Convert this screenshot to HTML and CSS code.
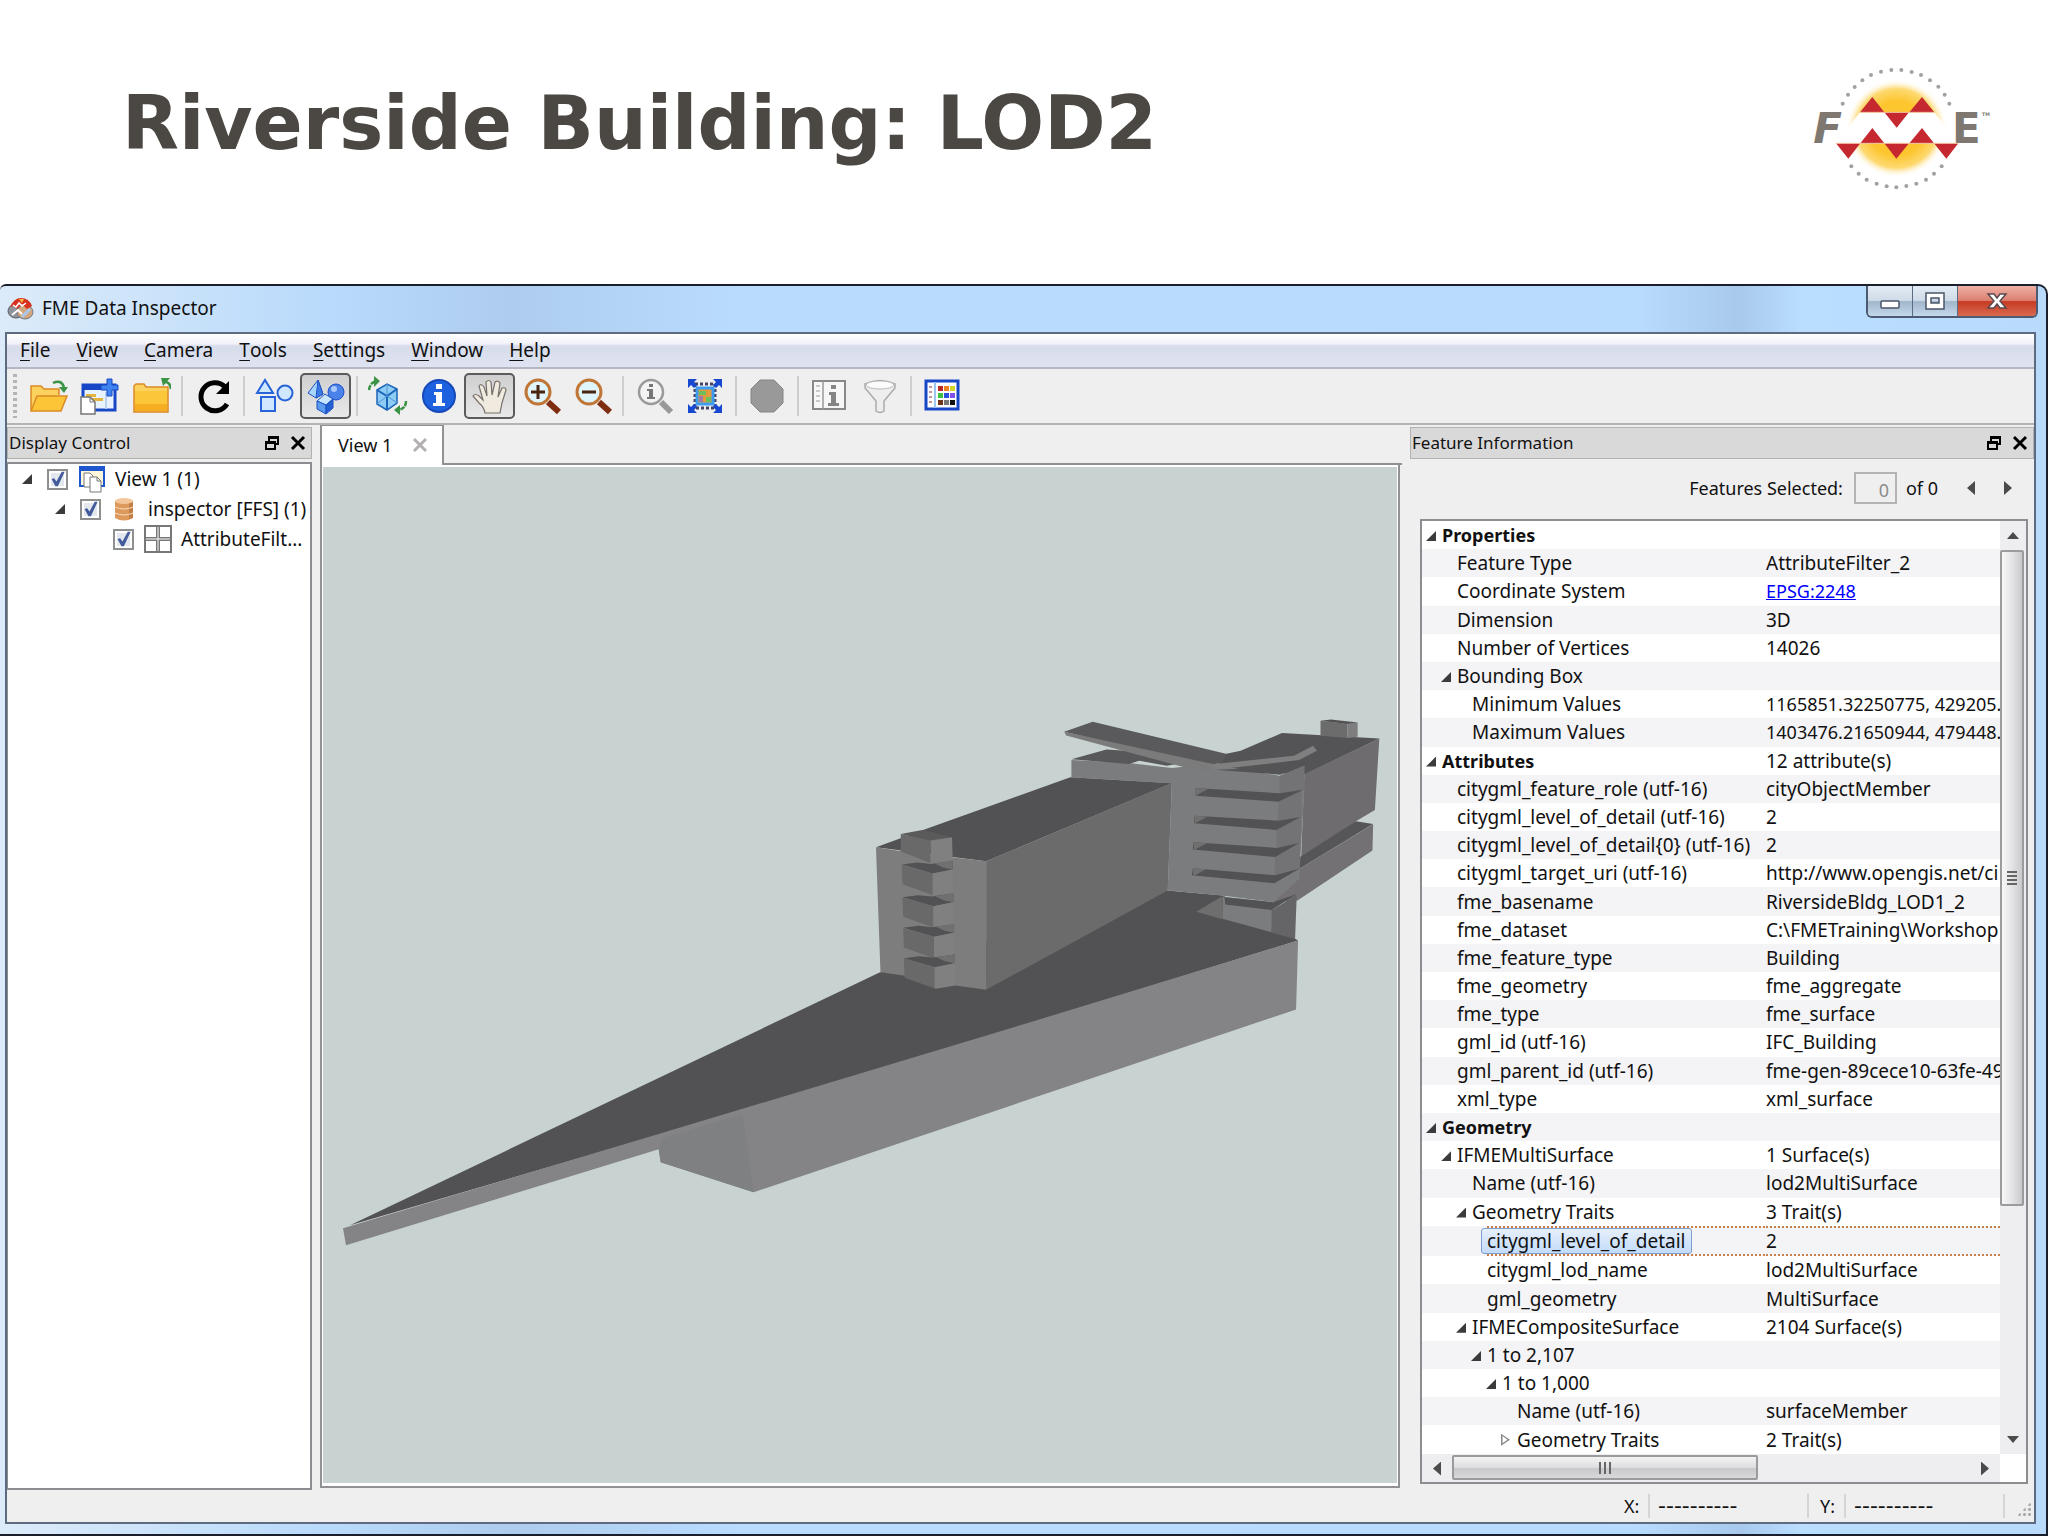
FILE: index.html
```html
<!DOCTYPE html>
<html lang="en">
<head>
    <meta charset="UTF-8">
    <meta name="viewport" content="width=device-width, initial-scale=1.0">
    <title>Riverside Building: LOD2</title>
    <link rel="stylesheet" href="styles.css">
</head>
<body>
    <header class="slide-header">
        <h1>Riverside Building: LOD2</h1>
        <svg class="logo" viewBox="0 0 720 480" role="img" aria-label="FME">
            <defs>
                <radialGradient id="sun">
                    <stop offset="0.55" stop-color="#fdc62f"/>
                    <stop offset="0.8" stop-color="#fdd970"/>
                    <stop offset="1" stop-color="#fff" stop-opacity="0"/>
                </radialGradient>
            </defs>
            <ellipse cx="350" cy="235" rx="152" ry="148" fill="url(#sun)"/>
            <g fill="#a3a0a3">
                <circle cx="188" cy="161" r="6"/><circle cx="204" cy="134" r="6"/><circle cx="224" cy="111" r="6"/>
                <circle cx="247" cy="91" r="6"/><circle cx="273" cy="75" r="6"/><circle cx="303" cy="65" r="6"/>
                <circle cx="334" cy="60" r="6"/><circle cx="364" cy="60" r="6"/><circle cx="395" cy="66" r="6"/>
                <circle cx="423" cy="75" r="6"/><circle cx="450" cy="91" r="6"/><circle cx="475" cy="110" r="6"/>
                <circle cx="494" cy="134" r="6"/><circle cx="508" cy="161" r="6"/><circle cx="214" cy="349" r="6"/>
                <circle cx="236" cy="371" r="6"/><circle cx="260" cy="389" r="6"/><circle cx="290" cy="401" r="6"/>
                <circle cx="320" cy="409" r="6"/><circle cx="349" cy="412" r="6"/><circle cx="379" cy="408" r="6"/>
                <circle cx="409" cy="401" r="6"/><circle cx="438" cy="389" r="6"/><circle cx="462" cy="371" r="6"/>
                <circle cx="485" cy="349" r="6"/>
            </g>
            <path d="M240 187H463L535 280H168Z" fill="#fff"/>
            <text class="logo-f" x="100" y="279">F</text>
            <text class="logo-e" x="516" y="279">E</text>
            <text class="logo-tm" x="606" y="197">TM</text>
            <path d="M240 187l37-46 36 46zM388 187l38-46 37 46zM313 187h74l-37 46zM241 280l36-46 36 46zM388 280l38-46 36 46zM168 280h73l-36 46zM313 280h74l-38 46zM462 280h73l-36 46z" fill="#c5282f"/>
            <path d="M240 187H463M168 280H535" stroke="#f2c3a0" stroke-width="3"/>
        </svg>
    </header>

    <div class="window">
        <div class="titlebar">
            <svg class="app-icon" viewBox="0 0 27 24">
                <ellipse cx="9" cy="14" rx="8" ry="7" fill="#8f9399" stroke="#59606b"/>
                <ellipse cx="18" cy="15" rx="8" ry="7" fill="#d3a77c" stroke="#6f7787"/>
                <path d="M3 10q4-9 11-9 8 0 11 8l-5 3-5-5-5 5-3-3z" fill="#d8301f"/>
                <path d="M12 2h5l-2 4z" fill="#f4b942"/>
                <path d="M6 8l3 2 3-4 3 3 4-3" stroke="#fff" stroke-width="1.500" fill="none"/>
                <path d="M5 18l6-5 4 4" stroke="#fff" stroke-width="2" fill="none"/>
                <path d="M15 20l8-8" stroke="#a9c7ef" stroke-width="3"/>
            </svg>
            <span class="window-title">FME Data Inspector</span>
            <div class="window-buttons">
                <button class="win-btn" aria-label="Minimize"><svg width="22" height="20" viewBox="0 0 22 20"><rect x="2" y="10" width="18" height="7" rx="1" fill="#fff" stroke="#4a5568" stroke-width="1.500"/></svg></button>
                <button class="win-btn" aria-label="Maximize"><svg width="22" height="20" viewBox="0 0 22 20"><path d="M2 2h18v16H2zM7 7v5h8V7z" fill="#fff" fill-rule="evenodd" stroke="#4a5568" stroke-width="1.500"/></svg></button>
                <button class="win-btn win-close" aria-label="Close"><svg width="22" height="20" viewBox="0 0 22 20"><path d="M2 3h6l3 4 3-4h6l-6 7 6 7h-6l-3-4-3 4H2l6-7z" fill="#fff" stroke="#5a4a50" stroke-width="1.500"/></svg></button>
            </div>
        </div>

        <div class="client">
            <nav class="menubar">
                <button><u>F</u>ile</button>
                <button><u>V</u>iew</button>
                <button><u>C</u>amera</button>
                <button><u>T</u>ools</button>
                <button><u>S</u>ettings</button>
                <button><u>W</u>indow</button>
                <button><u>H</u>elp</button>
            </nav>

            <div class="toolbar">
                <span class="grip"></span>
                <button aria-label="Open dataset"><svg viewBox="0 0 40 40">
                    <path d="M2 34V10h10l3 3h15v6" fill="#fbd25d" stroke="#dc8a24" stroke-width="1.500"/>
                    <path d="M2 35L8 20h30l-6 15z" fill="#fcc437" stroke="#dc8a24" stroke-width="1.500"/>
                    <path d="M24 7q8-4 11 4" fill="none" stroke="#3b9346" stroke-width="2.500"/><path d="M30 11h9l-4 6z" fill="#3b9346"/>
                </svg></button>
                <button aria-label="New view"><svg viewBox="0 0 40 40">
                    <rect x="3" y="9" width="32" height="25" fill="#e9f3ff" stroke="#1747c6" stroke-width="3"/>
                    <path d="M2 9h30v5H2z" fill="#1747c6"/><path d="M6 18h10v3H6zM9 22h14v3H9z" fill="#e3b53c"/><path d="M26 16v17" stroke="#b9d3ee" stroke-width="2"/>
                    <path d="M27 3h5v6h6v5h-6v6h-5v-6h-6V9h6z" fill="#3f83ee" stroke="#1747c6"/>
                    <path d="M1 21h9l5 5v12H1z" fill="#fff" stroke="#777" stroke-width="1.500"/><path d="M10 21v5h5" fill="none" stroke="#777"/>
                </svg></button>
                <button aria-label="Close dataset"><svg viewBox="0 0 40 40">
                    <path d="M3 36V10l2-2h8l2 3h22v25z" fill="#fbd25d" stroke="#dc8a24" stroke-width="1.500"/>
                    <path d="M4 15h32v20H4z" fill="#fcc63a"/><path d="M4 28h32v7H4z" fill="#f5ad22"/>
                    <path d="M40 13q-1-7-6-7" fill="none" stroke="#3b9346" stroke-width="2.500"/><path d="M30 2h9l-7 8z" fill="#3b9346"/>
                </svg></button>
                <span class="sep"></span>
                <button aria-label="Refresh"><svg viewBox="0 0 40 40">
                    <path d="M34 28a14 14 0 1 1-2-17" fill="none" stroke="#000" stroke-width="5"/><path d="M36 5v13H23z"/>
                </svg></button>
                <span class="sep"></span>
                <button aria-label="2D"><svg viewBox="0 0 40 40" fill="#cfe8ff" stroke="#2864d8" stroke-width="2">
                    <path d="M2 17L10 4l8 13z"/><circle cx="30" cy="17" r="7.500"/><rect x="6" y="21" width="14" height="14"/>
                </svg></button>
                <button class="pressed" aria-label="3D"><svg viewBox="0 0 40 40" stroke="#1d52c4">
                    <path d="M2 17L12 4l5 14-7 4z" fill="#a9d4ff"/><path d="M12 4l-2 18 7-4z" fill="#3d7ce4"/>
                    <circle cx="30" cy="16" r="8" fill="#4a82ea"/><circle cx="28" cy="13" r="3" fill="#a9c9ff" stroke="none"/>
                    <path d="M11 25l8-7 8 5-7 6z" fill="#c8e5ff"/><path d="M11 25l9 4v9l-9-5z" fill="#5c9bf0"/><path d="M20 29l7-6v9l-7 6z" fill="#235ed2"/>
                </svg></button>
                <span class="sep"></span>
                <button aria-label="Orbit"><svg viewBox="0 0 40 40">
                    <path d="M9 14l10-6 10 5v14l-10 7-10-6z" fill="#8ecbf5" stroke="#1c66b8" stroke-width="1.500"/>
                    <path d="M9 14l10 6 10-7M19 20v14" fill="none" stroke="#1c66b8" stroke-width="2"/><path d="M19 8v12M9 28l10-8 10 7" fill="none" stroke="#4d97d8"/>
                    <path d="M1 14q1-8 8-9M38 25q0 8-8 9" fill="none" stroke="#3b9346" stroke-width="2.500" stroke-dasharray="5 1"/><path d="M6 0l6 5-6 6zM32 29l-6 5 6 5z" fill="#3b9346"/>
                </svg></button>
                <button aria-label="Information"><svg viewBox="0 0 40 40">
                    <circle cx="20" cy="20" r="16" fill="#1f62e0" stroke="#1649ba" stroke-width="2"/>
                    <path d="M17 8h6v5h-6zM15 16h8v11h3v3H14v-3h3v-8h-2z" fill="#fff"/>
                </svg></button>
                <button class="pressed" aria-label="Pan"><svg viewBox="0 0 40 40">
                    <path d="M15 37q-1-6-6-10l-6-7q2-3 6 0l4 4-4-14q2-3 5 1l3 9-1-14q3-3 5 0l1 13 3-13q3-2 5 1l-2 14 4-9q4-1 4 2l-4 13-2 10z" fill="#f1eadf" stroke="#75706b" stroke-width="1.200"/>
                </svg></button>
                <button aria-label="Zoom in"><svg viewBox="0 0 40 40">
                    <path d="M27 26l11 10" stroke="#7e2d10" stroke-width="6"/><circle cx="17" cy="16" r="12" fill="#dff5fb" stroke="#c07637" stroke-width="3"/>
                    <path d="M17 9v14M10 16h14" stroke="#4a250f" stroke-width="3"/>
                </svg></button>
                <button aria-label="Zoom out"><svg viewBox="0 0 40 40">
                    <path d="M27 26l11 10" stroke="#7e2d10" stroke-width="6"/><circle cx="17" cy="16" r="12" fill="#dff5fb" stroke="#c07637" stroke-width="3"/>
                    <path d="M10 16h14" stroke="#4a250f" stroke-width="3"/>
                </svg></button>
                <span class="sep"></span>
                <button aria-label="Zoom to selected"><svg viewBox="0 0 40 40">
                    <path d="M27 26l10 10" stroke="#999" stroke-width="6"/><circle cx="17" cy="16" r="12" fill="#f3f3f3" stroke="#9a9a9a" stroke-width="2.500"/>
                    <path d="M15 8h4v3h-4zM13 13h6v8h2v2h-8v-2h2v-6h-2z" fill="#777"/>
                </svg></button>
                <button aria-label="Zoom to extents"><svg viewBox="0 0 40 40">
                    <path d="M10 8h20v24H10z" fill="none" stroke="#446" stroke-width="3" stroke-dasharray="3 2"/>
                    <rect x="12" y="12" width="16" height="16" fill="#e39a3b" stroke="#3b9cf2" stroke-width="3"/>
                    <path d="M14 15h7v4h-7zM21 21h5v5h-5z" fill="#6cbf5d"/><path d="M14 20h4v6h-4z" fill="#a17ba8"/>
                    <path d="M3 3h9l-3 3 3 3-3 3-3-3-3 3zM37 3v9l-3-3-3 3-3-3 3-3-3-3zM3 37v-9l3 3 3-3 3 3-3 3 3 3zM37 37h-9l3-3-3-3 3-3 3 3 3-3z" fill="#1648d0"/>
                </svg></button>
                <span class="sep"></span>
                <button aria-label="Stop"><svg viewBox="0 0 40 40"><path d="M13 4h14l9 9v14l-9 9H13l-9-9V13z" fill="#999" stroke="#858585"/></svg></button>
                <span class="sep"></span>
                <button aria-label="Feature information"><svg viewBox="0 0 40 40">
                    <rect x="4" y="5" width="32" height="28" fill="#f7f7f7" stroke="#888" stroke-width="2"/><path d="M14 5v28" stroke="#999" stroke-width="1.500"/>
                    <path d="M7 10h4M7 15h4M7 20h4M7 25h4" stroke="#bbb" stroke-width="1.500"/><path d="M22 9h5v4h-5zM20 16h7v11h3v3H19v-3h3v-8h-2z" fill="#858585"/>
                </svg></button>
                <button aria-label="Filter"><svg viewBox="0 0 40 40">
                    <path d="M5 8q15-7 30 0v4L24 25v10q-4 3-8 0V25L5 12z" fill="#eee" stroke="#aaa" stroke-width="1.500"/><ellipse cx="20" cy="9" rx="14" ry="4" fill="#fbfbfb" stroke="#bbb"/>
                </svg></button>
                <span class="sep"></span>
                <button aria-label="Background palette"><svg viewBox="0 0 40 40">
                    <rect x="4" y="5" width="32" height="28" fill="#fff" stroke="#1747c6" stroke-width="3"/><path d="M13 6v26" stroke="#9cc7f5" stroke-width="2"/>
                    <path d="M7 11h3M7 16h3M7 21h3M7 26h3" stroke="#a77" stroke-width="1.500"/>
                    <path d="M16 10h5v5h-5z" fill="#b92a22"/><path d="M22 10h5v5h-5z" fill="#ed8220"/><path d="M28 10h5v5h-5z" fill="#d4d428"/>
                    <path d="M16 17h5v5h-5z" fill="#3fc042"/><path d="M22 17h5v5h-5z" fill="#2851dc"/><path d="M28 17h5v5h-5z" fill="#8050e8"/>
                    <path d="M16 24h5v5h-5z" fill="#6e3518"/><path d="M22 24h5v5h-5z" fill="#777"/><path d="M28 24h5v5h-5z" fill="#111"/>
                </svg></button>
            </div>

            <main class="workspace">
                <section class="panel">
                    <div class="panel-header">
                        <h2>Display Control</h2>
                        <button aria-label="Float"><svg width="16" height="16" viewBox="0 0 16 16" fill="none" stroke="#000" stroke-width="2"><path d="M5 6V2h9v7h-3M5 3h9M2 7h9v7H2zM2 8h9"/></svg></button>
                        <button aria-label="Close"><svg width="16" height="16" viewBox="0 0 16 16" stroke="#000" stroke-width="3"><path d="M2 2l12 12M14 2L2 14"/></svg></button>
                    </div>
                    <ul class="tree">
                        <li class="tree-row">
                            <span class="arrow"></span>
                            <input type="checkbox" id="view1" checked>
                            <svg width="28" height="28" viewBox="0 0 28 28">
                                <rect x="2" y="2" width="24" height="19" fill="#fff8dc" stroke="#1e56d0" stroke-width="2"/><path d="M1 1h26v5H1z" fill="#1e56d0"/>
                                <path d="M6 8h6l3 3v11H6z" fill="#fff" stroke="#777"/><path d="M12 12h7l4 4v11H12z" fill="#fff" stroke="#777"/><path d="M19 12v4h4" fill="none" stroke="#777"/>
                            </svg>
                            <label for="view1">View 1 (1)</label>
                        </li>
                        <li class="tree-row level-1">
                            <span class="arrow"></span>
                            <input type="checkbox" id="inspector" checked>
                            <svg width="28" height="28" viewBox="0 0 28 28">
                                <path d="M4 6v17q9 5 18 0V6z" fill="#de9a5d"/><path d="M18 5v19l4-1V6z" fill="#c27f45"/><ellipse cx="13" cy="6" rx="9" ry="3" fill="#f3c79b"/>
                                <path d="M4 12q9 4 18 0M4 18q9 4 18 0" fill="none" stroke="#f7dcc0"/>
                            </svg>
                            <label for="inspector">inspector [FFS] (1)</label>
                        </li>
                        <li class="tree-row level-2">
                            <span class="arrow none"></span>
                            <input type="checkbox" id="filter" checked>
                            <svg width="28" height="28" viewBox="0 0 28 28" fill="#fff" stroke="#777" stroke-width="2"><path d="M1 1h26v26H1z"/><path d="M14 1v26M1 14h26" stroke-width="4"/><path d="M14 2v24M2 14h24" stroke="#fff" stroke-width="1"/></svg>
                            <label for="filter">AttributeFilt...</label>
                        </li>
                    </ul>
                </section>

                <section class="view">
                    <div class="tabs">
                        <div class="tab">View 1 <button aria-label="Close tab"><svg width="16" height="16" viewBox="0 0 16 16" stroke="#b2b0b0" stroke-width="3"><path d="M2 2l12 12M14 2L2 14"/></svg></button></div>
                        <div class="tab-rest"></div>
                    </div>
                    <div class="canvas">
                        <svg viewBox="322 466 1075 1017" preserveAspectRatio="xMidYMid meet">
                            <!-- ground slab -->
                            <path d="M349 1225L879 972l288-82 56 5 75 45-259 80-382 115z" fill="#525254"/>
                            <path d="M342 1228L657 1134l382-115 259-79-2 69-543 183-93-30-2-13-313 96z" fill="#848385"/>
                            <path d="M658 1149l4-11 80-24 11 78-93-30z" fill="#7e8081"/>

                            <g transform="translate(860 700) scale(.3444 .3333)">
                                <!-- rear wing -->
                                <path d="M1030 207l30-47 45-10 120-53 283 16-218 109z" fill="#545355"/>
                                <path d="M1290 220l218-107-13 215-55 34-160 130z" fill="#6e6c6f"/>
                                <path d="M1337 60l78 9v43l-78-7z" fill="#6c6c6d"/>
                                <path d="M1415 69l30-4v43l-30 4z" fill="#7e7e7f"/>
                                <path d="M1337 60l30-4 78 9-30 5z" fill="#525254"/>
                                <path d="M1440 362l50 8-215 135-75 45v-30z" fill="#565557"/>
                                <path d="M1490 371l-2 79-218 150-70 5 5-57 70-43z" fill="#737174"/>
                                <!-- lower core -->
                                <path d="M1050 588l2 68-76-22z" fill="#6e6e6f"/>
                                <path d="M1052 588l148 17-5 90-143-40z" fill="#7b7c7d"/>
                                <path d="M1195 628l73-45-5 133-68-20z" fill="#656466"/>
                                <path d="M1058 590l142 15 68-25-73 48-135-16z" fill="#525254"/>
                                <!-- tower -->
                                <path d="M613 178l167 9 125 15 110-12 203 35 72-30v75l-15 265-75 70-150-20-157-15 12-322-292-18z" fill="#7b7c7d"/>
                                <path d="M613 176l102-30 70 5 130 40-25 4-80-15-30 10z" fill="#58585a"/>
                                <path d="M1218 225l72-30v73l-72 10zM1215 303l67-34v78l-69 13zM1210 388l70-38v80l-72 12zM1205 468l72-38v72l-74 24z" fill="#737375"/>
                                <path d="M972 262l246 16 69-11-73 36-239-18zM970 345l245 15 66-12-72 40-239-20zM968 425l242 17 66-15-71 42-239-22zM966 503l239 21 72-20-74 44-240-24z" fill="#525254"/>
                                <path d="M972 262l38 3-36 20zM970 345l38 3-36 20zM968 425l38 3-36 20zM966 503l38 3-36 20z" fill="#707071"/>
                                <!-- canopy -->
                                <path d="M592 93l83-30 390 97-15 28-50 5z" fill="#5a5a5c"/>
                                <path d="M592 93l408 92 30 6-15 20-55-6-362-101z" fill="#7b7b7c"/>
                                <path d="M1030 207l190-5 75-15-75 35z" fill="#545355"/>
                                <path d="M1010 192l250-27 55-30 12 15-52 28-245 29z" fill="#7f7f80"/>
                                <!-- main block -->
                                <path d="M45 440l145-55 420-155 295 18-540 234z" fill="#525254"/>
                                <path d="M365 482l540-235-12 323-528 298z" fill="#6b6b6c"/>
                                <path d="M45 440l75 12 145 18 100 12v386l-90-13-55 10-95-40-67-10z" fill="#7d7d7e"/>
                                <!-- stair tower -->
                                <path d="M117 400l63-12 86 22-63 12z" fill="#5a5a5b"/>
                                <path d="M117 400l86 20v67l-86-34z" fill="#69696a"/>
                                <path d="M203 420l63-10 2 70-63 8z" fill="#808081"/>
                                <g id="landing">
                                    <path d="M120 492l45-6 40 4 63-9v26l-58 12z" fill="#525254"/>
                                    <path d="M215 489l53-9v27l-28-6z" fill="#707071"/>
                                    <path d="M120 493l90 26v64l-88-32z" fill="#69696a"/>
                                    <path d="M210 519l58-12v66l-58 10z" fill="#808081"/>
                                </g>
                                <use href="#landing" x="2" y="98"/>
                                <use href="#landing" x="4" y="190"/>
                                <use href="#landing" x="6" y="281"/>
                            </g>
                        </svg>
                    </div>
                </section>

                <section class="panel">
                    <div class="panel-header">
                        <h2>Feature Information</h2>
                        <button aria-label="Float"><svg width="16" height="16" viewBox="0 0 16 16" fill="none" stroke="#000" stroke-width="2"><path d="M5 6V2h9v7h-3M5 3h9M2 7h9v7H2zM2 8h9"/></svg></button>
                        <button aria-label="Close"><svg width="16" height="16" viewBox="0 0 16 16" stroke="#000" stroke-width="3"><path d="M2 2l12 12M14 2L2 14"/></svg></button>
                    </div>
                    <div class="selector">
                        <label for="selected">Features Selected:</label>
                        <input type="text" id="selected" value="0" disabled>
                        <span>of 0</span>
                        <button class="arrow-left" aria-label="Previous"></button>
                        <button class="arrow-right" aria-label="Next"></button>
                    </div>
                    <div class="info">
                        <div class="info-scroll">
                            <table>
                                <tbody>
                                    <tr><th><span class="arrow"></span>Properties</th><td></td></tr>
                                    <tr class="l1"><td>Feature Type</td><td>AttributeFilter_2</td></tr>
                                    <tr class="l1"><td>Coordinate System</td><td><a href="#">EPSG:2248</a></td></tr>
                                    <tr class="l1"><td>Dimension</td><td>3D</td></tr>
                                    <tr class="l1"><td>Number of Vertices</td><td>14026</td></tr>
                                    <tr class="l1"><td><span class="arrow"></span>Bounding Box</td><td></td></tr>
                                    <tr class="l2"><td>Minimum Values</td><td class="numbers">1165851.32250775, 429205.1</td></tr>
                                    <tr class="l2"><td>Maximum Values</td><td class="numbers">1403476.21650944, 479448.3</td></tr>
                                    <tr><th><span class="arrow"></span>Attributes</th><td>12 attribute(s)</td></tr>
                                    <tr class="l1"><td>citygml_feature_role (utf-16)</td><td>cityObjectMember</td></tr>
                                    <tr class="l1"><td>citygml_level_of_detail (utf-16)</td><td>2</td></tr>
                                    <tr class="l1"><td>citygml_level_of_detail{0} (utf-16)</td><td>2</td></tr>
                                    <tr class="l1"><td>citygml_target_uri (utf-16)</td><td>http://www.opengis.net/ci</td></tr>
                                    <tr class="l1"><td>fme_basename</td><td>RiversideBldg_LOD1_2</td></tr>
                                    <tr class="l1"><td>fme_dataset</td><td>C:\FMETraining\Workshop</td></tr>
                                    <tr class="l1"><td>fme_feature_type</td><td>Building</td></tr>
                                    <tr class="l1"><td>fme_geometry</td><td>fme_aggregate</td></tr>
                                    <tr class="l1"><td>fme_type</td><td>fme_surface</td></tr>
                                    <tr class="l1"><td>gml_id (utf-16)</td><td>IFC_Building</td></tr>
                                    <tr class="l1"><td>gml_parent_id (utf-16)</td><td>fme-gen-89cece10-63fe-49</td></tr>
                                    <tr class="l1"><td>xml_type</td><td>xml_surface</td></tr>
                                    <tr><th><span class="arrow"></span>Geometry</th><td></td></tr>
                                    <tr class="l1"><td><span class="arrow"></span>IFMEMultiSurface</td><td>1 Surface(s)</td></tr>
                                    <tr class="l2"><td>Name (utf-16)</td><td>lod2MultiSurface</td></tr>
                                    <tr class="l2"><td><span class="arrow"></span>Geometry Traits</td><td>3 Trait(s)</td></tr>
                                    <tr class="l3 selected"><td><span class="highlight">citygml_level_of_detail</span></td><td>2</td></tr>
                                    <tr class="l3"><td>citygml_lod_name</td><td>lod2MultiSurface</td></tr>
                                    <tr class="l3"><td>gml_geometry</td><td>MultiSurface</td></tr>
                                    <tr class="l2"><td><span class="arrow"></span>IFMECompositeSurface</td><td>2104 Surface(s)</td></tr>
                                    <tr class="l3"><td><span class="arrow"></span>1 to 2,107</td><td></td></tr>
                                    <tr class="l4"><td><span class="arrow"></span>1 to 1,000</td><td></td></tr>
                                    <tr class="l5"><td>Name (utf-16)</td><td>surfaceMember</td></tr>
                                    <tr class="l5"><td><span class="arrow closed"></span>Geometry Traits</td><td>2 Trait(s)</td></tr>
                                </tbody>
                            </table>
                        </div>
                        <div class="scrollbar vertical">
                            <button class="up" aria-label="Scroll up"></button>
                            <div class="track"><div class="thumb"></div></div>
                            <button class="down" aria-label="Scroll down"></button>
                        </div>
                        <div class="scrollbar horizontal">
                            <button class="arrow-left" aria-label="Scroll left"></button>
                            <div class="track"><div class="thumb"></div></div>
                            <button class="arrow-right" aria-label="Scroll right"></button>
                        </div>
                    </div>
                </section>
            </main>

            <footer class="statusbar">
                <span class="axis">X:</span><span class="coord">----------</span>
                <span class="axis">Y:</span><span class="coord">----------</span>
                <span class="resize"></span>
            </footer>
        </div>
    </div>
</body>
</html>
```
FILE: styles.css
```css
* {
    box-sizing: border-box;
}

body {
    margin: 0;
    height: 100vh;
    display: flex;
    flex-direction: column;
    background: #fff;
    color: #111;
    font-family: "Noto Sans", "Open Sans", sans-serif;
    font-size: 19px;
    line-height: 24px;
}

button {
    padding: 0;
    border: none;
    background: none;
    font: inherit;
    color: inherit;
    display: flex;
    align-items: center;
    justify-content: center;
}

/* Slide header */
.slide-header {
    display: flex;
    justify-content: space-between;
    height: 284px;
    padding: 50px 28px 0 122px;
}

h1 {
    margin: 25px 0 0;
    font-family: "DejaVu Sans", sans-serif;
    font-size: 74px;
    line-height: 96px;
    color: #4b4742;
}

.logo {
    width: 240px;
    height: 160px;
}

.logo text {
    font-family: "DejaVu Sans", sans-serif;
    font-weight: bold;
    fill: #7e7871;
}

.logo-f {
    font-size: 126px;
    font-style: oblique;
}

.logo-e {
    font-size: 126px;
}

.logo .logo-tm {
    font-size: 14px;
}

/* Window frame */
.window {
    flex: 1;
    min-height: 0;
    display: flex;
    flex-direction: column;
    padding: 0 10px 10px 5px;
    border: 2px solid #1b1f2b;
    border-left: none;
    border-radius: 6px 10px 0 0;
    background: linear-gradient(90deg, #dcebf9 0, #b9dafb 16%, #aecdee 25%, #b9dbfd 36%, #b9dbfd 60%, #b8dcfd 80%, #a8c9ec 85%, #b9defe 88%, #b9dafb 100%);
}

.titlebar {
    display: flex;
    align-items: center;
    height: 46px;
    padding-left: 2px;
}

.app-icon {
    width: 27px;
    height: 24px;
}

.window-title {
    flex: 1;
    margin-left: 8px;
    padding-bottom: 2px;
}

.window-buttons {
    display: flex;
    align-self: flex-start;
    margin-right: -2px;
    border: 2px solid #4c5b70;
    border-top: none;
    border-radius: 0 0 6px 6px;
    overflow: hidden;
}

.win-btn {
    width: 45px;
    height: 30px;
    border-right: 1px solid #5b6c82;
    background: linear-gradient(#e3ecf5 0, #cfdbe8 48%, #a2b6cb 52%, #c3d8ea 100%);
}

.win-close {
    width: 78px;
    border-right: none;
    background: linear-gradient(#eeb1a5 0, #dc8071 48%, #c63b22 52%, #d9694f 100%);
}

.client {
    flex: 1;
    min-height: 0;
    display: flex;
    flex-direction: column;
    border: 2px solid #5d6b80;
    background: #f0eff0;
}

/* Menu and toolbar */
.menubar {
    display: flex;
    gap: 26px;
    height: 35px;
    padding: 0 0 2px 13px;
    border-bottom: 2px solid #b3b7c2;
    background: linear-gradient(#fff 0, #f1f1f9 30%, #d7dceb 36%, #dfe3f1 100%);
}

.menubar u {
    text-underline-offset: 3px;
}

.toolbar {
    display: flex;
    align-items: center;
    height: 56px;
    padding-left: 6px;
    border-bottom: 2px solid #b5b4b5;
}

.toolbar button {
    width: 51px;
    height: 46px;
}

.toolbar button svg {
    width: 40px;
    height: 40px;
}

.toolbar .pressed {
    border: 2px solid #5b5b5b;
    border-radius: 5px;
    background: linear-gradient(#d0cfd0, #e9e8e9);
}

.grip {
    width: 4px;
    height: 44px;
    margin-right: 6px;
    background: repeating-linear-gradient(#b5b4b5 0 3px, transparent 3px 6px);
}

.sep {
    width: 11px;
    height: 40px;
    background: linear-gradient(#cfcecf, #cfcecf) center / 2px 100% no-repeat;
}

/* Docked panels */
.workspace {
    flex: 1;
    min-height: 0;
    display: grid;
    grid-template-columns: 305px 1fr 624px;
    gap: 8px;
}

.panel {
    display: flex;
    flex-direction: column;
    min-width: 0;
    min-height: 0;
}

.panel-header {
    display: flex;
    align-items: center;
    gap: 10px;
    height: 32px;
    margin-top: 2px;
    padding: 0 5px 0 1px;
    border: 1px solid #b3b2b3;
    background: #dad9da;
}

.panel-header h2 {
    flex: 1;
    margin: 0;
    font-size: 17px;
    font-weight: normal;
}

.tree {
    flex: 1;
    margin: 3px 0 0;
    padding: 0 0 0 14px;
    border: 2px solid #8d8c90;
    border-left-width: 1px;
    background: #fff;
    list-style: none;
}

.tree-row {
    display: flex;
    align-items: center;
    height: 30px;
    white-space: nowrap;
}

.tree-row.level-1 {
    padding-left: 33px;
}

.tree-row.level-2 {
    padding-left: 66px;
}

.tree-row svg {
    margin: 0 9px 0 10px;
}

.tree-row input {
    appearance: none;
    width: 21px;
    height: 21px;
    margin: 0 0 0 15px;
    border: 2px solid #8e8f8f;
    background: #e3e7ee;
    box-shadow: inset 0 0 0 2px #fff;
}

.tree-row input::after {
    content: "";
    display: block;
    height: 17px;
    background: #435b9a;
    clip-path: polygon(15% 50%, 30% 45%, 44% 65%, 75% 8%, 92% 8%, 52% 92%, 38% 92%);
}

.arrow {
    display: inline-block;
    width: 10px;
    height: 10px;
    background: #3b3b3b;
    clip-path: polygon(100% 0, 100% 100%, 0 100%);
}

.arrow.none {
    visibility: hidden;
}

.arrow.closed {
    height: 12px;
    background: #888;
    clip-path: polygon(0 0, 90% 50%, 0 100%, 0 0, 15% 20%, 15% 80%, 65% 50%, 15% 20%);
}

/* 3D view */
.view {
    display: flex;
    flex-direction: column;
    min-width: 0;
    min-height: 0;
    margin-bottom: 2px;
}

.tabs {
    display: flex;
    height: 40px;
}

.tab {
    display: flex;
    align-items: center;
    gap: 20px;
    width: 124px;
    padding: 0 0 2px 16px;
    border: 2px solid #8f9192;
    border-top-width: 1px;
    border-bottom: none;
    background: #fff;
    font-size: 18px;
    white-space: nowrap;
}

.tab-rest {
    flex: 1;
    border-bottom: 2px solid #8f9192;
}

.canvas {
    flex: 1;
    min-height: 0;
    margin-right: 2px;
    border: 2px solid #8f9192;
    border-top: none;
    padding: 2px 1px 3px;
    background: #fff;
}

.canvas svg {
    display: block;
    width: 100%;
    height: 100%;
    background: #c8d3d1;
}

/* Feature information */
.selector {
    display: flex;
    align-items: center;
    justify-content: flex-end;
    height: 60px;
    padding: 0 22px 2px 0;
    font-size: 18px;
}

.selector input {
    width: 43px;
    height: 32px;
    margin: 0 9px 0 11px;
    padding: 4px 6px 0 0;
    border: 2px solid #b5b4b5;
    background: #f0eff0;
    color: #8b8b8b;
    font: inherit;
    text-align: right;
}

.selector button {
    margin-left: 29px;
}

.arrow-left::before,
.arrow-right::before,
.up::before,
.down::before {
    content: "";
    width: 8px;
    height: 14px;
    background: #4b4b4b;
    clip-path: polygon(100% 0, 100% 100%, 0 50%);
}

.arrow-right::before {
    clip-path: polygon(0 0, 100% 50%, 0 100%);
}

.up::before {
    width: 12px;
    height: 7px;
    clip-path: polygon(50% 0, 100% 100%, 0 100%);
}

.down::before {
    width: 12px;
    height: 7px;
    clip-path: polygon(0 0, 100% 0, 50% 100%);
}

.info {
    flex: 1;
    min-height: 0;
    display: grid;
    grid-template-columns: 1fr 26px;
    grid-template-rows: 1fr 28px;
    margin: 0 6px 6px 10px;
    border: 2px solid #8d8c90;
    background: #fff;
}

.info-scroll {
    min-width: 0;
    min-height: 0;
    overflow: hidden;
}

.info table {
    width: 100%;
    height: 100%;
    table-layout: fixed;
    border-collapse: collapse;
}

.info tr:nth-child(even) {
    background: #f4f3f5;
}

.info td,
.info th {
    padding: 0;
    font-weight: normal;
    text-align: left;
    white-space: nowrap;
    overflow: hidden;
}

.info th,
.info td:first-child {
    width: 344px;
    padding-left: 20px;
}

.info th {
    font-size: 18px;
    font-weight: bold;
}

.info .numbers {
    font-size: 18px;
}

.info .arrow {
    margin: 0 6px 0 -16px;
    vertical-align: 1px;
}

.info .l1 td:first-child {
    padding-left: 35px;
}

.info .l2 td:first-child {
    padding-left: 50px;
}

.info .l3 td:first-child {
    padding-left: 65px;
}

.info .l4 td:first-child {
    padding-left: 80px;
}

.info .l5 td:first-child {
    padding-left: 95px;
}

.info .selected td {
    background: linear-gradient(90deg, #c9824e 50%, transparent 50%) 0 0 / 4px 2px repeat-x, linear-gradient(90deg, #c9824e 50%, transparent 50%) 0 100% / 4px 2px repeat-x;
}

.info .selected td:first-child {
    background-origin: content-box;
    background-clip: content-box;
}

.highlight {
    display: inline-block;
    margin-left: -6px;
    padding: 0 5px;
    border: 1px solid #7f9fd0;
    border-radius: 3px;
    background: linear-gradient(#e6effb, #c3dcfa);
}

.info a {
    color: #00f;
    font-size: 18px;
}

.scrollbar {
    display: flex;
    background: #eeedef;
}

.scrollbar .track {
    flex: 1;
}

.scrollbar .thumb {
    border: 2px solid #9b9b9e;
    border-radius: 2px;
}

.vertical {
    flex-direction: column;
}

.vertical button {
    height: 29px;
}

.vertical .thumb {
    width: 24px;
    height: 75%;
    background: repeating-linear-gradient(#666 0 2px, transparent 2px 4px) center / 10px 14px no-repeat, linear-gradient(90deg, #f7f7f7, #e4e4e6 50%, #c9c9cd);
}

.horizontal {
    padding-top: 1px;
}

.horizontal button {
    width: 30px;
}

.horizontal .thumb {
    width: 59%;
    height: 25px;
    background: repeating-linear-gradient(90deg, #666 0 2px, transparent 2px 5px) center / 12px 12px no-repeat, linear-gradient(#f3f3f3, #dedee0 50%, #c9c9cd 55%, #d8d8da);
}

/* Status bar */
.statusbar {
    display: flex;
    align-items: center;
    justify-content: flex-end;
    height: 32px;
    font-size: 18px;
}

.axis {
    width: 35px;
    padding-left: 11px;
}

.coord {
    width: 161px;
    padding-left: 8px;
    border-left: 2px solid #d6d5d6;
    border-right: 2px solid #d6d5d6;
    font-family: "DejaVu Sans", sans-serif;
    font-size: 22px;
}

.resize {
    width: 14px;
    height: 14px;
    margin: 6px 3px 0 12px;
    background: radial-gradient(#a8a8a8 1px, transparent 2px) 0 0 / 5px 5px;
    clip-path: polygon(100% 0, 100% 100%, 0 100%);
}
```
